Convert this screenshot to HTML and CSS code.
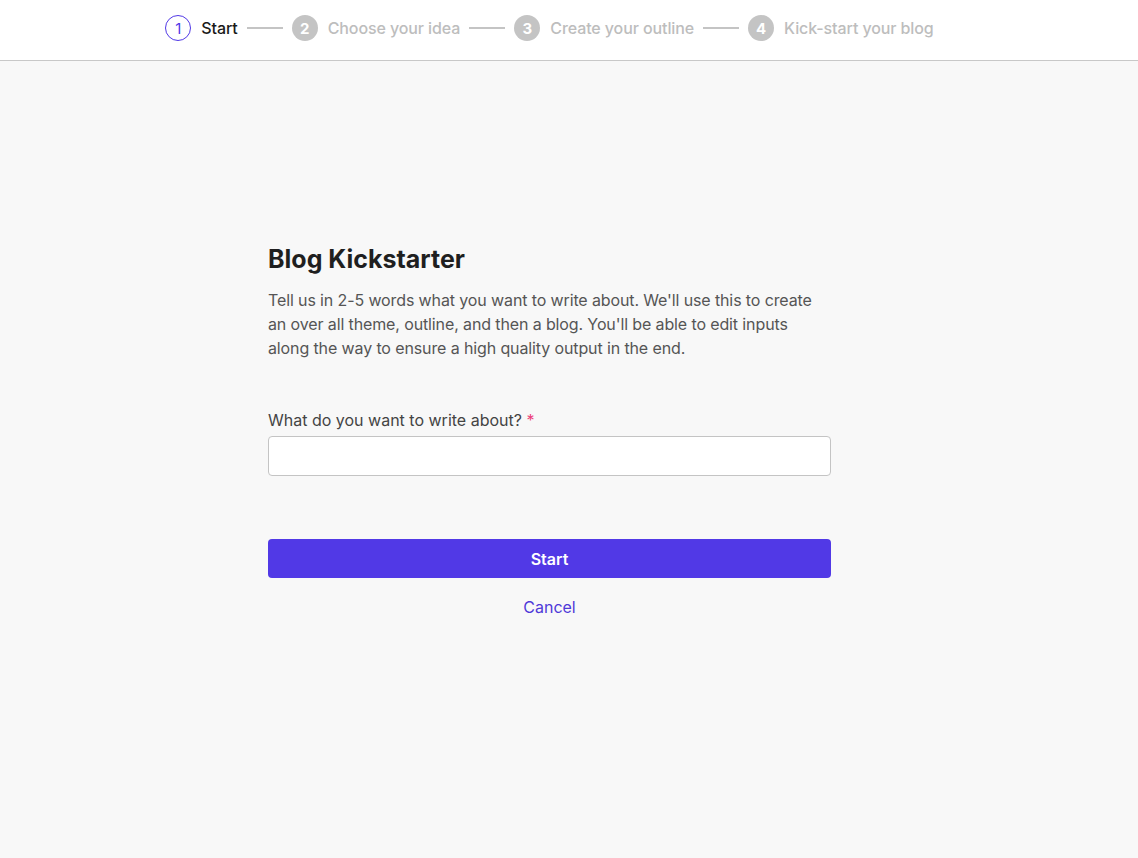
FILE: index.html
```html
<!DOCTYPE html>
<html lang="en">
<head>
<meta charset="utf-8">
<title>Blog Kickstarter</title>
<link rel="stylesheet" href="styles.css">
</head>
<body>
<header class="topbar">
  <nav class="steps">
    <div class="step active"><span class="num">1</span><span class="label">Start</span></div>
    <span class="sep"></span>
    <div class="step"><span class="num">2</span><span class="label">Choose your idea</span></div>
    <span class="sep"></span>
    <div class="step"><span class="num">3</span><span class="label">Create your outline</span></div>
    <span class="sep"></span>
    <div class="step"><span class="num">4</span><span class="label">Kick-start your blog</span></div>
  </nav>
</header>
<main class="main">
  <section class="card">
    <h1 class="title">Blog Kickstarter</h1>
    <p class="desc">Tell us in 2-5 words what you want to write about. We'll use this to create an over all theme, outline, and then a blog. You'll be able to edit inputs along the way to ensure a high quality output in the end.</p>
    <label class="field-label" for="topic">What do you want to write about? <span class="req">*</span></label>
    <input class="field" id="topic" type="text">
    <button class="btn-primary" type="button">Start</button>
    <a class="cancel" href="#">Cancel</a>
  </section>
</main>
</body>
</html>
```
FILE: styles.css
```css
* { box-sizing: border-box; }
html, body { margin: 0; padding: 0; }
body {
  font-family: Inter, "Noto Sans", sans-serif;
  background: #f8f8f8;
  min-height: 858px;
  color: #222;
}
.topbar {
  height: 61px;
  background: #fff;
  border-bottom: 1px solid #c8c8c8;
  display: flex;
  justify-content: center;
  padding-right: 39px;
}
.steps {
  display: flex;
  align-items: center;
  height: 56px;
  gap: 9px;
}
.step {
  display: flex;
  align-items: center;
  gap: 10px;
}
.num {
  width: 26px;
  height: 26px;
  border-radius: 50%;
  background: #c4c4c4;
  color: #fff;
  font-weight: 700;
  font-size: 15px;
  display: flex;
  align-items: center;
  justify-content: center;
}
.label {
  font-size: 16px;
  color: #bdbdbd;
  font-weight: 500;
  letter-spacing: -0.1px;
}
.step.active .num {
  background: #fff;
  border: 1px solid #5139e6;
  color: #5139e6;
  font-weight: 400;
}
.step.active .label { color: #1a1a1a; font-weight: 500; }
.sep {
  width: 36px;
  height: 2px;
  background: #c4c4c4;
}
.main {
  display: flex;
  justify-content: center;
  padding-right: 39px;
  padding-top: 179px;
}
.card {
  width: 563px;
  display: flex;
  flex-direction: column;
}
.title {
  font-size: 25px;
  font-weight: 700;
  color: #1f1f1f;
  margin: 0 0 10px;
  line-height: 38px;
}
.desc {
  margin: 0 0 48px;
  font-size: 16px;
  line-height: 24px;
  color: #555;
  letter-spacing: -0.12px;
}
.field-label {
  font-size: 16px;
  line-height: 24px;
  color: #444;
  font-weight: 400;
  margin-bottom: 4px;
}
.req { color: #ec407a; }
.field {
  height: 40px;
  border: 1px solid #c4c4c4;
  border-radius: 4px;
  background: #fff;
  font: inherit;
  padding: 0 12px;
  margin: 0 0 63px;
}
.btn-primary {
  height: 39px;
  border: 0;
  border-radius: 4px;
  background: #5139e6;
  color: #fff;
  font: inherit;
  font-size: 16px;
  font-weight: 600;
  cursor: pointer;
}
.cancel {
  align-self: center;
  margin-top: 17px;
  font-size: 16px;
  line-height: 24px;
  color: #4f3ad8;
  text-decoration: none;
}
```
